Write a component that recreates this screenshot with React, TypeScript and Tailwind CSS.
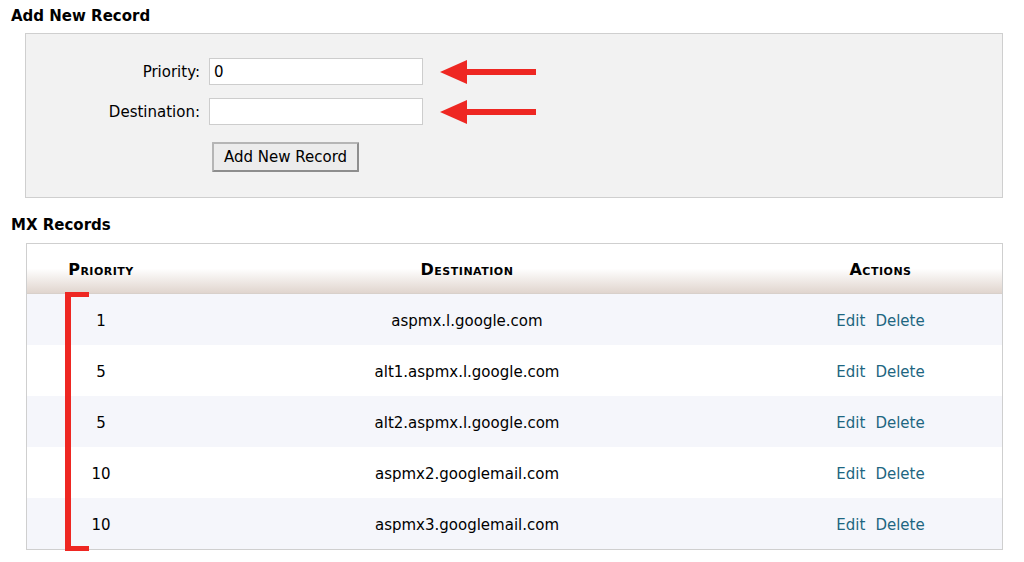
import React from 'react';

const records = [
  { priority: 1, destination: 'aspmx.l.google.com' },
  { priority: 5, destination: 'alt1.aspmx.l.google.com' },
  { priority: 5, destination: 'alt2.aspmx.l.google.com' },
  { priority: 10, destination: 'aspmx2.googlemail.com' },
  { priority: 10, destination: 'aspmx3.googlemail.com' },
];

function Arrow() {
  return (
    <svg width="98" height="26" viewBox="0 0 98 26" className="ml-[17px]">
      <polygon points="0,13 27,1 27,25" fill="#ee2722" />
      <rect x="25" y="10" width="71" height="6" fill="#ee2722" />
    </svg>
  );
}

export default function App() {
  return (
    <div className="w-[1024px] h-[562px] bg-white text-black overflow-hidden" style={{ fontFamily: '"DejaVu Sans", Verdana, sans-serif' }}>
      <div className="pl-[11px] pt-[7px] text-[15px] font-bold leading-[18px]">Add New Record</div>
      <div className="ml-[25px] mr-[21px] mt-[8px] h-[165px] border border-[#cfcfcf] bg-[#f2f2f2] pt-[24px]">
        <div className="flex items-center h-[27px]">
          <span className="w-[183px] text-right text-[15px] pr-[9px] pt-[2px]">Priority:</span>
          <input defaultValue="0" className="w-[214px] h-[27px] bg-white border border-[#cdcdcd] px-[4px] text-[15px] outline-none" />
          <Arrow />
        </div>
        <div className="flex items-center h-[27px] mt-[13px]">
          <span className="w-[183px] text-right text-[15px] pr-[9px] pt-[2px]">Destination:</span>
          <input className="w-[214px] h-[27px] bg-white border border-[#cdcdcd] px-[4px] text-[15px] outline-none" />
          <Arrow />
        </div>
        <div className="pl-[186px] mt-[17px]">
          <button className="w-[147px] h-[30px] border-2 border-[#8e8e8e] border-t-[#b5b5b5] border-l-[#b5b5b5] bg-[#ececec] text-[15px] rounded-[1px]">
            Add New Record
          </button>
        </div>
      </div>
      <div className="pl-[11px] pt-[18px] text-[15px] font-bold leading-[18px]">MX Records</div>
      <div className="relative ml-[26px] w-[977px] mt-[9px] border border-[#cfcfcf]">
        <div className="flex h-[50px] items-center pt-[2px] bg-gradient-to-b from-white from-50% to-[#e0d5ce] border-b border-[#d8d0ca] text-[16px] font-bold tracking-[0.5px]" style={{ fontVariant: 'small-caps' }}>
          <div className="w-[148px] text-center">Priority</div>
          <div className="w-[584px] text-center">Destination</div>
          <div className="flex-1 text-center">Actions</div>
        </div>
        {records.map((r, i) => (
          <div key={i} className={`flex h-[51px] items-center pt-[3px] text-[15px] ${i % 2 === 0 ? 'bg-[#f5f6fb]' : 'bg-white'}`}>
            <div className="w-[148px] text-center">{r.priority}</div>
            <div className="w-[584px] text-center">{r.destination}</div>
            <div className="flex-1 text-center text-[#1e6681]">
              <span>Edit</span>
              <span className="ml-[10px]">Delete</span>
            </div>
          </div>
        ))}
        <div className="absolute left-[38px] top-[48px] w-[6px] h-[259px] bg-[#ee2722]" />
        <div className="absolute left-[38px] top-[48px] w-[24px] h-[5px] bg-[#ee2722]" />
        <div className="absolute left-[38px] top-[302px] w-[24px] h-[5px] bg-[#ee2722]" />
      </div>
    </div>
  );
}
